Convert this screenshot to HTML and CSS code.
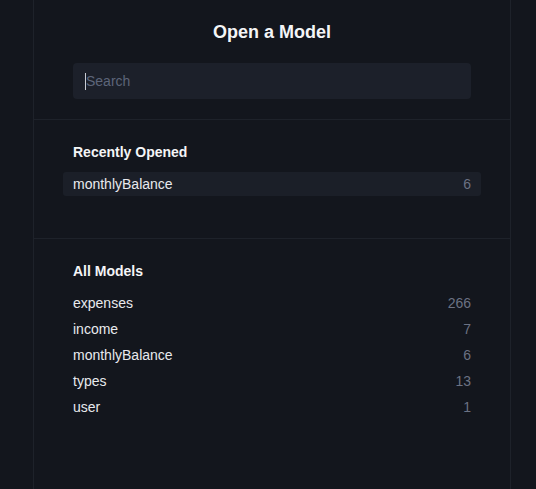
FILE: index.html
```html
<!DOCTYPE html>
<html>
<head>
<meta charset="utf-8">
<link rel="stylesheet" href="styles.css">
</head>
<body>
<div class="panel">
  <div class="header">
    <h1 class="title">Open a Model</h1>
    <div class="search"><span class="caret"></span><span class="placeholder">Search</span></div>
  </div>
  <div class="section recent">
    <h2 class="section-title">Recently Opened</h2>
    <div class="rows">
      <div class="row active"><span class="name">monthlyBalance</span><span class="count">6</span></div>
    </div>
  </div>
  <div class="section">
    <h2 class="section-title">All Models</h2>
    <div class="rows">
      <div class="row"><span class="name">expenses</span><span class="count">266</span></div>
      <div class="row"><span class="name">income</span><span class="count">7</span></div>
      <div class="row"><span class="name">monthlyBalance</span><span class="count">6</span></div>
      <div class="row"><span class="name">types</span><span class="count">13</span></div>
      <div class="row"><span class="name">user</span><span class="count">1</span></div>
    </div>
  </div>
</div>
</body>
</html>
```

FILE: styles.css
```css
html, body {
  margin: 0;
  padding: 0;
  background: #13161d;
  height: 100%;
}
body {
  font-family: "Liberation Sans", Arial, sans-serif;
  color: #e8eaee;
}
.panel {
  margin-left: 33px;
  width: 476px;
  min-height: 100%;
  border-left: 1px solid #1e222a;
  border-right: 1px solid #1e222a;
}
.header {
  padding: 20px 39px 20px 39px;
  border-bottom: 1px solid #1e222a;
}
.title {
  margin: 0 0 19px 0;
  font-size: 18px;
  line-height: 24px;
  font-weight: bold;
  text-align: center;
  color: #f4f5f7;
}
.search {
  height: 36px;
  background: #1c202a;
  border-radius: 4px;
  display: flex;
  align-items: center;
  padding-left: 12px;
}
.caret {
  width: 1px;
  height: 17px;
  background: #c8ccd4;
}
.placeholder {
  font-size: 14px;
  color: #5c6579;
}
.section {
  padding: 23px 39px 0 39px;
}
.recent {
  padding-bottom: 42px;
  border-bottom: 1px solid #1e222a;
}
.section-title {
  margin: 0 0 11px 0;
  font-size: 14px;
  line-height: 18px;
  font-weight: bold;
  color: #f4f5f7;
}
.rows {
  display: flex;
  flex-direction: column;
  gap: 2px;
  margin: 0 -10px;
}
.row {
  display: flex;
  justify-content: space-between;
  align-items: center;
  height: 24px;
  padding: 0 10px;
  border-radius: 3px;
  font-size: 14px;
}
.row.active {
  background: #1b1f28;
}
.name {
  color: #e8eaee;
}
.count {
  color: #6b7283;
}
```
